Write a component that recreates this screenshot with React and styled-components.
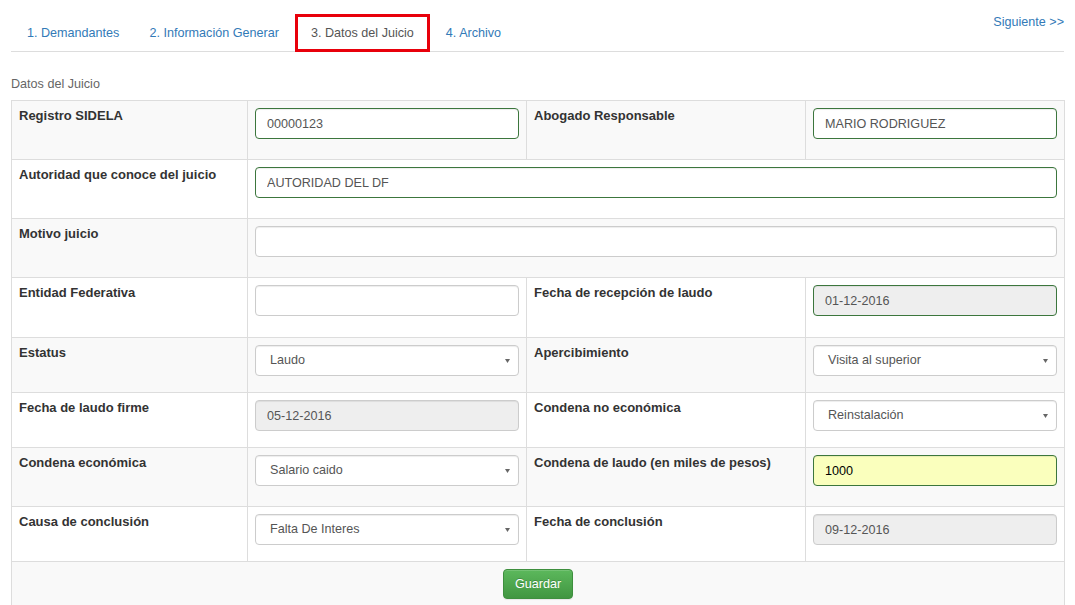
import React from 'react';
import styled, { createGlobalStyle } from 'styled-components';

const GlobalStyle = createGlobalStyle`
  body {
    margin: 0;
    background: #fff;
    font-family: "Liberation Sans", Arial, sans-serif;
    font-size: 12.6px;
    color: #333;
  }
`;

const Page = styled.div`
  margin: 0 11px;
`;

const Header = styled.div`
  display: flex;
  justify-content: space-between;
  align-items: flex-start;
  padding-top: 14px;
  border-bottom: 1px solid #ddd;
`;

const Tabs = styled.ul`
  display: flex;
  list-style: none;
  margin: 0 0 -1px 0;
  padding: 0;
`;

const Tab = styled.li`
  line-height: 18px;
  height: 38px;
  box-sizing: border-box;
  padding: ${p => (p.$active ? '7px 13px' : '9px 15px')};
  margin-right: ${p => (p.$tight ? '-2px' : '0')};
  border: ${p => (p.$active ? '3px solid #e8000b' : '1px solid transparent')};
  background: ${p => (p.$active ? '#fff' : 'transparent')};
  color: ${p => (p.$active ? '#555' : '#337ab7')};
  white-space: nowrap;
`;

const NextLink = styled.a`
  color: #337ab7;
  text-decoration: none;
  line-height: 18px;
  margin-top: -1px;
`;

const Caption = styled.div`
  color: #666;
  line-height: 18px;
  margin: 23px 0 7px;
`;

const Table = styled.table`
  width: 100%;
  table-layout: fixed;
  border-collapse: collapse;
  border: 1px solid #ddd;
`;

const Row = styled.tr`
  height: ${p => p.$h}px;
  background: ${p => (p.$odd ? '#f9f9f9' : '#fff')};
`;

const Cell = styled.td`
  border: 1px solid #ddd;
  padding: ${p => (p.$label ? '6px 7px 7px' : '7px')};
  vertical-align: top;
  line-height: 17px;
  font-size: ${p => (p.$label ? '13px' : 'inherit')};
  font-weight: ${p => (p.$label ? 700 : 400)};
  text-align: ${p => (p.$center ? 'center' : 'left')};
`;

const tones = {
  plain: { border: '#ccc', bg: '#fff', color: '#555' },
  success: { border: '#3c763d', bg: '#fff', color: '#555' },
  disabled: { border: '#ccc', bg: '#eee', color: '#555' },
  successDisabled: { border: '#3c763d', bg: '#eee', color: '#555' },
  autofill: { border: '#3c763d', bg: '#faffbd', color: '#000' },
};

const Input = styled.input`
  display: block;
  box-sizing: border-box;
  width: 100%;
  height: 31px;
  margin: 0;
  padding: 0 11px;
  border-radius: 4px;
  border: 1px solid ${p => tones[p.$tone].border};
  background: ${p => tones[p.$tone].bg};
  color: ${p => tones[p.$tone].color};
  font: inherit;
  font-size: 12.6px;
  font-weight: 400;
  box-shadow: inset 0 1px 1px rgba(0, 0, 0, 0.075);
  outline: none;
`;

const Select = styled.div`
  display: flex;
  align-items: center;
  justify-content: space-between;
  box-sizing: border-box;
  height: 31px;
  padding: 0 8px 0 14px;
  border: 1px solid #ccc;
  border-radius: 4px;
  background: #fff;
  color: #555;
  font-weight: 400;
  box-shadow: inset 0 1px 1px rgba(0, 0, 0, 0.075);
`;

const Caret = () => (
  <svg width="5" height="4" viewBox="0 0 5 4">
    <path d="M0 0 H5 L2.5 4 Z" fill="#666" />
  </svg>
);

const SaveButton = styled.button`
  height: 30px;
  padding: 0 11px;
  border: 1px solid #3e8f3e;
  border-radius: 4px;
  background: linear-gradient(to bottom, #5cb85c 0%, #419641 100%);
  color: #fff;
  font: inherit;
  font-size: 12.6px;
  text-shadow: 0 -1px 0 rgba(0, 0, 0, 0.2);
  box-shadow: inset 0 1px 0 rgba(255, 255, 255, 0.15), 0 1px 1px rgba(0, 0, 0, 0.075);
`;

const Field = ({ f }) =>
  f.select ? (
    <Select>
      <span>{f.value}</span>
      <Caret />
    </Select>
  ) : (
    <Input readOnly value={f.value} $tone={f.tone || 'plain'} />
  );

const rows = [
  {
    h: 59,
    cells: [
      ['Registro SIDELA', { value: '00000123', tone: 'success' }],
      ['Abogado Responsable', { value: 'MARIO RODRIGUEZ', tone: 'success' }],
    ],
  },
  { h: 59, cells: [['Autoridad que conoce del juicio', { value: 'AUTORIDAD DEL DF', tone: 'success' }]] },
  { h: 59, cells: [['Motivo juicio', { value: '' }]] },
  {
    h: 60,
    cells: [
      ['Entidad Federativa', { value: '' }],
      ['Fecha de recepción de laudo', { value: '01-12-2016', tone: 'successDisabled' }],
    ],
  },
  {
    h: 55,
    cells: [
      ['Estatus', { value: 'Laudo', select: true }],
      ['Apercibimiento', { value: 'Visita al superior', select: true }],
    ],
  },
  {
    h: 55,
    cells: [
      ['Fecha de laudo firme', { value: '05-12-2016', tone: 'disabled' }],
      ['Condena no económica', { value: 'Reinstalación', select: true }],
    ],
  },
  {
    h: 59,
    cells: [
      ['Condena económica', { value: 'Salario caido', select: true }],
      ['Condena de laudo (en miles de pesos)', { value: '1000', tone: 'autofill' }],
    ],
  },
  {
    h: 55,
    cells: [
      ['Causa de conclusión', { value: 'Falta De Interes', select: true }],
      ['Fecha de conclusión', { value: '09-12-2016', tone: 'disabled' }],
    ],
  },
];

const tabs = ['1. Demandantes', '2. Información Generar', '3. Datos del Juicio', '4. Archivo'];

export default function App() {
  return (
    <Page>
      <GlobalStyle />
      <Header>
        <Tabs>
          {tabs.map((t, i) => (
            <Tab key={t} $active={i === 2} $tight={i === 0}>{t}</Tab>
          ))}
        </Tabs>
        <NextLink href="#">Siguiente &gt;&gt;</NextLink>
      </Header>

      <Caption>Datos del Juicio</Caption>

      <Table>
        <colgroup>
          <col style={{ width: 236 }} />
          <col style={{ width: 279 }} />
          <col style={{ width: 279 }} />
          <col style={{ width: 259 }} />
        </colgroup>
        <tbody>
          {rows.map((r, i) => (
            <Row key={i} $h={r.h} $odd={i % 2 === 0}>
              {r.cells.map(([label, f]) => (
                <React.Fragment key={label}>
                  <Cell $label>{label}</Cell>
                  <Cell colSpan={r.cells.length === 1 ? 3 : 1}>
                    <Field f={f} />
                  </Cell>
                </React.Fragment>
              ))}
            </Row>
          ))}
          <Row $h={50} $odd>
            <Cell colSpan={4} $center>
              <SaveButton type="button">Guardar</SaveButton>
            </Cell>
          </Row>
        </tbody>
      </Table>
    </Page>
  );
}
